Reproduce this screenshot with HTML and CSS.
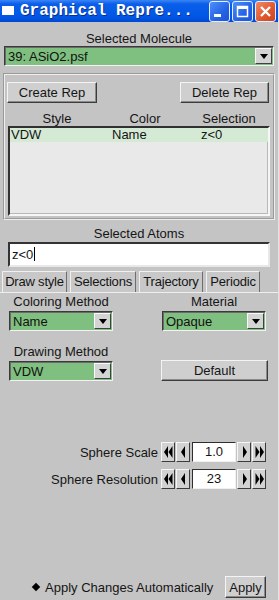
FILE: index.html
```html
<!DOCTYPE html>
<html lang="en">
  <head>
    <meta charset="UTF-8" />
    <title>Graphical Representations</title>
    <link rel="stylesheet" href="styles.css">
  </head>
  <body>
    <div class="window">
      <div class="titlebar">
        <span class="title-icon"></span>
        <span class="title-text">Graphical Repre...</span>
        <div class="win-btns">
          <span class="win-btn">
            <svg width="19" height="19" viewBox="0 0 19 19"><rect x="4" y="12" width="7" height="3" fill="#fff"/></svg>
          </span>
          <span class="win-btn">
            <svg width="19" height="19" viewBox="0 0 19 19"><rect x="4.5" y="4.5" width="10" height="10" fill="none" stroke="#fff" stroke-width="1.5"/><rect x="4" y="4" width="11" height="3" fill="#fff"/></svg>
          </span>
          <span class="win-btn close">
            <svg width="19" height="19" viewBox="0 0 19 19"><path d="M5 5 L14 14 M14 5 L5 14" stroke="#fff" stroke-width="2.4"/></svg>
          </span>
        </div>
      </div>

      <div class="panel">
        <div class="caption first">Selected Molecule</div>
        <div class="select wide">
          <span>39: ASiO2.psf</span>
          <span class="drop"><i class="tri"></i></span>
        </div>

        <div class="rep-frame">
          <div class="rep-buttons">
            <button class="btn rep-btn">Create Rep</button>
            <button class="btn rep-btn">Delete Rep</button>
          </div>
          <div class="list-head">
            <span>Style</span>
            <span>Color</span>
            <span>Selection</span>
          </div>
          <div class="list-box">
            <div class="list-row active">
              <span>VDW</span>
              <span>Name</span>
              <span>z&lt;0</span>
            </div>
          </div>
        </div>

        <div class="caption atoms">Selected Atoms</div>
        <div class="atoms-input">z&lt;0<span class="caret"></span></div>
      </div>

      <div class="tabs">
        <span class="tab t1">Draw style</span>
        <span class="tab t2">Selections</span>
        <span class="tab t3">Trajectory</span>
        <span class="tab t4">Periodic</span>
      </div>

      <div class="tab-body">
        <div class="opt-grid">
          <div class="field">
            <div class="caption">Coloring Method</div>
            <div class="select small">
              <span>Name</span>
              <span class="drop"><i class="tri"></i></span>
            </div>
          </div>
          <div class="field">
            <div class="caption">Material</div>
            <div class="select small">
              <span>Opaque</span>
              <span class="drop"><i class="tri"></i></span>
            </div>
          </div>
          <div class="field">
            <div class="caption">Drawing Method</div>
            <div class="select small">
              <span>VDW</span>
              <span class="drop"><i class="tri"></i></span>
            </div>
          </div>
          <div class="field bottom">
            <button class="btn default-btn">Default</button>
          </div>
        </div>

        <div class="spinners">
          <div class="spin-row">
            <span class="spin-label">Sphere Scale</span>
            <span class="sbtn"><svg width="9" height="12" viewBox="0 0 9 12"><polygon points="0,6 4,0 4,12"/><polygon points="4.5,6 8.5,0 8.5,12"/></svg></span>
            <span class="sbtn"><svg width="5" height="12" viewBox="0 0 5 12"><polygon points="0,6 4,0 4,12"/></svg></span>
            <span class="spin-val">1.0</span>
            <span class="sbtn"><svg width="5" height="12" viewBox="0 0 5 12"><polygon points="5,6 1,0 1,12"/></svg></span>
            <span class="sbtn"><svg width="9" height="12" viewBox="0 0 9 12"><polygon points="4.5,6 0.5,0 0.5,12"/><polygon points="9,6 5,0 5,12"/></svg></span>
          </div>
          <div class="spin-row">
            <span class="spin-label">Sphere Resolution</span>
            <span class="sbtn"><svg width="9" height="12" viewBox="0 0 9 12"><polygon points="0,6 4,0 4,12"/><polygon points="4.5,6 8.5,0 8.5,12"/></svg></span>
            <span class="sbtn"><svg width="5" height="12" viewBox="0 0 5 12"><polygon points="0,6 4,0 4,12"/></svg></span>
            <span class="spin-val">23</span>
            <span class="sbtn"><svg width="5" height="12" viewBox="0 0 5 12"><polygon points="5,6 1,0 1,12"/></svg></span>
            <span class="sbtn"><svg width="9" height="12" viewBox="0 0 9 12"><polygon points="4.5,6 0.5,0 0.5,12"/><polygon points="9,6 5,0 5,12"/></svg></span>
          </div>
        </div>

        <div class="footer">
          <span class="diamond"></span>
          <span class="auto-label">Apply Changes Automatically</span>
          <button class="btn apply-btn">Apply</button>
        </div>
      </div>
    </div>
  </body>
</html>
```

FILE: styles.css
```css
* {
  margin: 0;
  padding: 0;
  box-sizing: border-box;
}

body {
  font-family: "Liberation Sans", Arial, sans-serif;
  font-size: 13px;
  color: #151515;
  background-color: #c4c4c4;
}

.window {
  width: 279px;
  height: 600px;
  display: flex;
  flex-direction: column;
  background-color: #c4c4c4;
  border-right: 1px solid #e2e2e2;
}

/* title bar */
.titlebar {
  height: 22px;
  display: flex;
  align-items: center;
  padding-left: 2px;
  background: linear-gradient(#3b86f5, #0a5ee9 18%, #0057e6 75%, #0149cf);
}

.title-icon {
  width: 12px;
  height: 9px;
  background-color: #fff;
  margin-right: 6px;
  margin-top: -2px;
}

.title-text {
  flex: 1;
  font-family: "Liberation Mono", "Courier New", monospace;
  font-weight: bold;
  font-size: 16px;
  color: #fff;
  text-shadow: 1px 1px 0 #0a2f8a;
  white-space: nowrap;
}

.win-btns {
  display: flex;
  gap: 2px;
  margin-right: 2px;
}

.win-btn {
  width: 21px;
  height: 21px;
  border: 1px solid #e6eeff;
  border-radius: 3px;
  background: linear-gradient(135deg, #4f8ff7, #2463e6 60%, #1d54d6);
  display: flex;
  align-items: center;
  justify-content: center;
}

.win-btn.close {
  background: linear-gradient(135deg, #f08a64, #e0562c 60%, #cc4420);
}

/* common widgets */
.panel {
  padding: 0 4px;
}

.caption {
  height: 15px;
  line-height: 15px;
  text-align: center;
  white-space: nowrap;
}

.caption.first {
  margin-top: 9px;
}

.select {
  height: 20px;
  display: flex;
  align-items: center;
  justify-content: space-between;
  background-color: #7fbf7f;
  border: 1px solid;
  border-color: #3a3a3a #f2f2f2 #f2f2f2 #3a3a3a;
  box-shadow: inset 1px 1px 0 #6a6a6a;
  padding-left: 3px;
  color: #111;
}

.drop {
  width: 17px;
  height: 16px;
  margin-right: 1px;
  background-color: #d4d4d4;
  border: 1px solid;
  border-color: #fafafa #404040 #404040 #fafafa;
  display: flex;
  align-items: center;
  justify-content: center;
}

.tri {
  width: 0;
  height: 0;
  border-left: 4px solid transparent;
  border-right: 4px solid transparent;
  border-top: 5px solid #000;
}

.btn {
  font-family: "Liberation Sans", Arial, sans-serif;
  font-size: 13px;
  color: #151515;
  background-color: #cfcfcf;
  border: 1px solid;
  border-color: #f4f4f4 #3c3c3c #3c3c3c #f4f4f4;
  box-shadow: inset -1px -1px 0 #8a8a8a;
}

/* reps */
.rep-frame {
  margin: 7px -1px 0;
  border: 2px groove #eeeeee;
  padding: 7px 3px 2px 2px;
}

.rep-buttons {
  display: flex;
  justify-content: space-between;
}

.rep-btn {
  width: 90px;
  height: 21px;
}

.rep-btn + .rep-btn {
  width: 89px;
  margin-right: 1px;
}

.list-head {
  margin-top: 8px;
  padding-left: 1px;
  display: grid;
  grid-template-columns: 98px 78px 90px;
  height: 15px;
  line-height: 15px;
  text-align: center;
}

.list-box {
  margin-left: 1px;
  height: 90px;
  background-color: #e9e9e9;
  border: 2px solid;
  border-color: #303030 #f6f6f6 #f6f6f6 #303030;
  box-shadow: inset -1px -1px 0 #b8b8b8;
}

.list-row {
  display: grid;
  grid-template-columns: 101px 89px auto;
  height: 14px;
  line-height: 14px;
  padding-left: 1px;
}

.list-row.active {
  background-color: #d5ead5;
}

.caption.atoms {
  margin-top: 6px;
}

.atoms-input {
  margin: 1px 4px 0 4px;
  height: 25px;
  line-height: 21px;
  padding-left: 2px;
  background-color: #fff;
  border: 2px solid;
  border-color: #333 #e8e8e8 #e8e8e8 #333;
}

.caret {
  display: inline-block;
  width: 1px;
  height: 14px;
  background-color: #000;
  vertical-align: -2px;
  margin-left: 1px;
}

/* tabs */
.tabs {
  margin-top: 4px;
  padding-left: 2px;
  display: flex;
  gap: 3px;
  border-bottom: 1px solid #eeeeee;
}

.tab {
  height: 21px;
  line-height: 19px;
  text-align: center;
  letter-spacing: -0.2px;
  white-space: nowrap;
  border: 1px solid;
  border-bottom: none;
  border-color: #f0f0f0 #6e6e6e #f0f0f0 #f0f0f0;
  background-color: #c8c8c8;
}

.t1 { width: 65px; }
.t2 { width: 66px; }
.t3 { width: 64px; }
.t4 { width: 54px; }

/* draw style page */
.tab-body {
  flex: 1;
  display: flex;
  flex-direction: column;
  padding: 1px 12px 2px 9px;
}

.opt-grid {
  display: grid;
  grid-template-columns: 104px 104px;
  justify-content: space-between;
  row-gap: 13px;
}

.field .caption {
  margin-bottom: 2px;
}

.field.bottom {
  display: flex;
  align-items: flex-end;
}

.default-btn {
  width: 107px;
  height: 21px;
  margin-left: -1px;
  margin-right: -2px;
}

.spinners {
  margin-top: 61px;
  display: flex;
  flex-direction: column;
  gap: 7px;
}

.spin-row {
  display: flex;
  justify-content: flex-end;
  align-items: center;
  height: 20px;
}

.spin-label {
  margin-right: 2px;
}

.sbtn {
  width: 14px;
  height: 20px;
  display: flex;
  align-items: center;
  justify-content: center;
  background-color: #d2d2d2;
  border: 1px solid;
  border-color: #f6f6f6 #3c3c3c #3c3c3c #f6f6f6;
  margin-left: 1px;
}

.sbtn svg {
  fill: #000;
}

.spin-val {
  width: 44px;
  height: 20px;
  line-height: 17px;
  margin-left: 2px;
  text-align: center;
  background-color: #fff;
  border: 1px solid;
  border-color: #2e2e2e #f0f0f0 #f0f0f0 #2e2e2e;
}

.footer {
  margin-top: auto;
  display: flex;
  align-items: center;
  padding-left: 24px;
}

.diamond {
  width: 6px;
  height: 6px;
  background-color: #000;
  transform: rotate(45deg);
  margin-right: 6px;
}

.auto-label {
  flex: 1;
}

.apply-btn {
  width: 41px;
  height: 22px;
}
```
